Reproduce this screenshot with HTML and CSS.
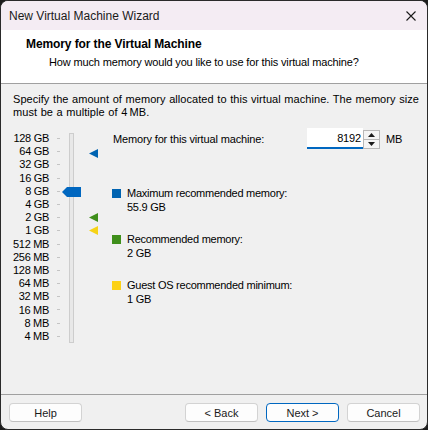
FILE: index.html
```html
<!DOCTYPE html>
<html>
<head>
<meta charset="utf-8">
<link rel="stylesheet" href="styles.css">
</head>
<body>
<div class="window">
  <div class="titlebar">
    <span class="title">New Virtual Machine Wizard</span>
    <svg class="close" width="10" height="10" viewBox="0 0 10 10"><path d="M0.5 0.5 L9.5 9.5 M9.5 0.5 L0.5 9.5" stroke="#1a1a1a" stroke-width="1.1" fill="none"/></svg>
  </div>
  <div class="header">
    <div class="h-title">Memory for the Virtual Machine</div>
    <div class="h-sub">How much memory would you like to use for this virtual machine?</div>
  </div>
  <div class="content">
    <p class="desc">Specify the amount of memory allocated to this virtual machine. The memory size<br>must be a multiple of 4&#8201;MB.</p>
    <div class="main">
      <div class="scale">
        <div class="labels">
          <div>128 GB</div><div>64 GB</div><div>32 GB</div><div>16 GB</div><div>8 GB</div><div>4 GB</div><div>2 GB</div><div>1 GB</div><div>512 MB</div><div>256 MB</div><div>128 MB</div><div>64 MB</div><div>32 MB</div><div>16 MB</div><div>8 MB</div><div>4 MB</div>
        </div>
        <div class="ticks">
          <i></i><i></i><i></i><i></i><i></i><i></i><i></i><i></i><i></i><i></i><i></i><i></i><i></i><i></i><i></i><i></i>
        </div>
        <div class="track"></div>
        <svg class="thumb" width="19" height="10" viewBox="0 0 19 10"><path d="M0 5 L5 0 H19 V10 H5 Z" fill="#0067c0"/></svg>
        <svg class="marker m-blue" width="9" height="9" viewBox="0 0 9 9"><path d="M0 4.5 L9 0 V9 Z" fill="#0063b1"/></svg>
        <svg class="marker m-green" width="9" height="9" viewBox="0 0 9 9"><path d="M0 4.5 L9 0 V9 Z" fill="#3f8f1b"/></svg>
        <svg class="marker m-yellow" width="9" height="9" viewBox="0 0 9 9"><path d="M0 4.5 L9 0 V9 Z" fill="#f6d317"/></svg>
      </div>
      <div class="panel">
        <div class="mem-row">
          <span class="mem-label">Memory for this virtual machine:</span>
          <div class="field">8192</div>
          <div class="spin">
            <div class="spin-btn"><svg width="7" height="4" viewBox="0 0 7 4"><path d="M0 4 L3.5 0 L7 4 Z" fill="#1a1a1a"/></svg></div>
            <div class="spin-btn"><svg width="7" height="4" viewBox="0 0 7 4"><path d="M0 0 L3.5 4 L7 0 Z" fill="#1a1a1a"/></svg></div>
          </div>
          <span class="unit">MB</span>
        </div>
        <div class="legend">
          <div class="item"><span class="sq blue"></span><div><div>Maximum recommended memory:</div><div>55.9 GB</div></div></div>
          <div class="item"><span class="sq green"></span><div><div>Recommended memory:</div><div>2 GB</div></div></div>
          <div class="item"><span class="sq yellow"></span><div><div>Guest OS recommended minimum:</div><div>1 GB</div></div></div>
        </div>
      </div>
    </div>
  </div>
  <div class="footer">
    <button class="btn">Help</button>
    <span class="spacer"></span>
    <button class="btn">&lt; Back</button>
    <button class="btn default">Next &gt;</button>
    <button class="btn">Cancel</button>
  </div>
</div>
</body>
</html>
```
FILE: styles.css
```css
* { box-sizing: border-box; }
html, body { margin: 0; padding: 0; background: #1c1c1c; }
body { width: 428px; height: 430px; overflow: hidden; }
.window {
  width: 428px; height: 430px;
  border: 1px solid #2a2a2a;
  border-radius: 8px;
  overflow: hidden;
  background: #f0f0f0;
  font-family: "Liberation Sans", Arial, sans-serif;
  font-size: 11px;
  letter-spacing: -0.15px;
  color: #000;
  white-space: nowrap;
  display: flex; flex-direction: column;
}
.titlebar {
  height: 29px; flex: none;
  background: #f4ecf3;
  display: flex; align-items: center;
  padding: 0 0 0 8px;
}
.title { flex: 1; color: #1a1a1a; padding-top: 1px; font-size: 12px; letter-spacing: 0; }
.close { margin-right: 11px; margin-top: 0px; }
.header {
  height: 54px; flex: none;
  background: #fff;
  border-bottom: 1px solid #a0a0a0;
  padding: 6px 0 0 25px;
}
.h-title { font-weight: bold; line-height: 16px; font-size: 12px; letter-spacing: -0.1px; }
.h-sub { line-height: 16px; margin-top: 2px; padding-left: 23px; }
.content {
  height: 311px; flex: none;
  border-bottom: 1px solid #a0a0a0;
  padding: 9px 0 0 12px;
}
.desc { margin: 0; line-height: 13px; letter-spacing: 0.05px; word-spacing: 0.5px; }
.main { display: flex; margin-top: 9px; }
.scale { position: relative; display: flex; width: 99px; height: 220px; flex: none; }
.labels { width: 36px; text-align: right; padding-top: 4px; line-height: 13.2px; letter-spacing: -0.3px; }
.ticks { width: 3px; margin-left: 8px; padding-top: 4px; display: flex; flex-direction: column; }
.ticks i { display: block; height: 13.2px; position: relative; }
.ticks i::after { content: ""; position: absolute; left: 0; top: 6px; width: 3px; height: 1px; background: #c4c4c4; }
.track {
  width: 5px; margin-left: 9px; margin-top: 5px; height: 210px;
  border: 1px solid #cdcdcd; background: #e8e8e8;
}
.thumb { position: absolute; left: 49px; top: 59px; }
.marker { position: absolute; left: 76px; }
.m-blue { top: 21px; }
.m-green { top: 85px; }
.m-yellow { top: 98px; }
.panel { flex: 1; }
.mem-row { display: flex; align-items: center; height: 21px; }
.mem-label { width: 195px; padding-left: 1px; }
.field {
  width: 56px; height: 21px; background: #fff;
  border-bottom: 2px solid #0067c0;
  text-align: right; padding-right: 2px; line-height: 20px;
}
.spin { width: 17px; height: 19px; margin-top: 2px; display: flex; flex-direction: column; border: 1px solid #b8b8b8; background: #f4f4f4; }
.spin-btn { flex: 1; display: flex; align-items: center; justify-content: center; }
.spin-btn + .spin-btn { border-top: 1px solid #b8b8b8; }
.unit { margin-left: 6px; }
.legend { margin-top: 37px; display: flex; flex-direction: column; gap: 18px; letter-spacing: -0.25px; }
.item { display: flex; line-height: 14px; }
.sq { width: 9px; height: 9px; margin-top: 3px; margin-right: 6px; flex: none; }
.sq.blue { background: #0063b1; }
.sq.green { background: #3f8f1b; }
.sq.yellow { background: #fcd116; }
.footer {
  flex: 1; display: flex; align-items: flex-start;
  padding: 8px 7px 0 8px;
}
.spacer { flex: 1; }
.btn {
  width: 73px; height: 19px;
  font-family: "Liberation Sans", Arial, sans-serif; font-size: 11px; color: #1a1a1a;
  background: #fdfdfd;
  border: 1px solid #d3d3d3; border-bottom-color: #c0c0c0;
  border-radius: 4px; padding: 0; line-height: 16px;
}
.btn + .btn { margin-left: 8px; }
.btn.default { border: 1px solid #0067c0; }
```
